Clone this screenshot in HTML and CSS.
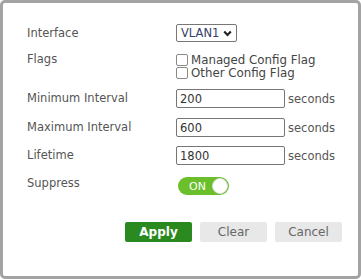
FILE: index.html
```html
<!DOCTYPE html>
<html lang="en">
<head>
  <meta charset="UTF-8">
  <title>IPv6 RA Settings</title>
  <link rel="stylesheet" href="styles.css">
</head>
<body>
  <div class="dialog">
    <div class="row row-interface">
      <span class="label">Interface</span>
      <div class="select">
        <span>VLAN1</span>
        <svg width="9" height="7" viewBox="0 0 9 7"><polyline points="1.2,1.5 4.5,5 7.8,1.5" fill="none" stroke="#222" stroke-width="2.2"/></svg>
      </div>
    </div>
    <div class="row row-flags">
      <span class="label">Flags</span>
      <div class="checks">
        <label class="check"><span class="box"></span>Managed Config Flag</label>
        <label class="check"><span class="box"></span>Other Config Flag</label>
      </div>
    </div>
    <div class="row row-min">
      <span class="label">Minimum Interval</span>
      <input type="text" value="200"><span class="unit">seconds</span>
    </div>
    <div class="row row-max">
      <span class="label">Maximum Interval</span>
      <input type="text" value="600"><span class="unit">seconds</span>
    </div>
    <div class="row row-life">
      <span class="label">Lifetime</span>
      <input type="text" value="1800"><span class="unit">seconds</span>
    </div>
    <div class="row row-suppress">
      <span class="label">Suppress</span>
      <div class="toggle">
        <span>ON</span>
        <span class="knob"></span>
      </div>
    </div>
    <div class="buttons">
      <button class="apply">Apply</button>
      <button>Clear</button>
      <button>Cancel</button>
    </div>
  </div>
</body>
</html>
```
FILE: styles.css
```css
* {
  padding: 0;
  margin: 0;
  box-sizing: border-box;
  font-family: "DejaVu Sans", sans-serif;
}
body {
  background: white;
}
.dialog {
  width: 361px;
  height: 279px;
  border: 3px solid #a3a3a3;
  border-radius: 5px;
  padding: 21px 16px 0 24px;
  color: #555;
  font-size: 11.5px;
}
.row {
  display: flex;
  align-items: center;
}
.label {
  width: 149px;
  flex-shrink: 0;
  line-height: 13px;
}
.row-flags {
  margin-top: 11px;
  align-items: flex-start;
}
.row-min {
  margin-top: 10px;
}
.row-max {
  margin-top: 10px;
}
.row-life {
  margin-top: 9px;
}
.row-suppress {
  margin-top: 12px;
  align-items: flex-start;
}
.select {
  width: 61px;
  height: 18px;
  border: 1px solid #767676;
  border-radius: 2px;
  display: flex;
  align-items: center;
  justify-content: space-between;
  padding: 0 4px 0 4px;
  color: #34406b;
}
.checks {
  display: flex;
  flex-direction: column;
  color: #444;
  font-size: 11.8px;
}
.check {
  display: flex;
  align-items: center;
  height: 13px;
}
.box {
  width: 12px;
  height: 12px;
  border: 1px solid #8a8a8a;
  border-radius: 2px;
  margin-right: 3px;
}
input {
  width: 109px;
  height: 19px;
  border: 1px solid #767676;
  border-radius: 2px;
  padding: 0 3px;
  font-size: 11.5px;
  color: #333;
  outline: none;
}
.unit {
  margin-left: 3px;
}
.toggle {
  width: 51px;
  height: 18px;
  margin-left: 2px;
  border-radius: 9px;
  background: #6abf2b;
  display: flex;
  align-items: center;
  justify-content: space-between;
  padding: 0 1px 0 11px;
  color: white;
  font-size: 11px;
}
.knob {
  width: 16px;
  height: 16px;
  border-radius: 50%;
  background: white;
  border: 1px solid #dcdcdc;
}
.buttons {
  display: flex;
  justify-content: flex-end;
  gap: 8px;
  margin-top: 27px;
}
.buttons button {
  width: 67px;
  height: 20px;
  border: none;
  border-radius: 2px;
  background: #e8e8e8;
  color: #666;
  font-size: 12px;
}
.buttons .apply {
  background: #2b8a1f;
  color: white;
  font-weight: bold;
}
```
